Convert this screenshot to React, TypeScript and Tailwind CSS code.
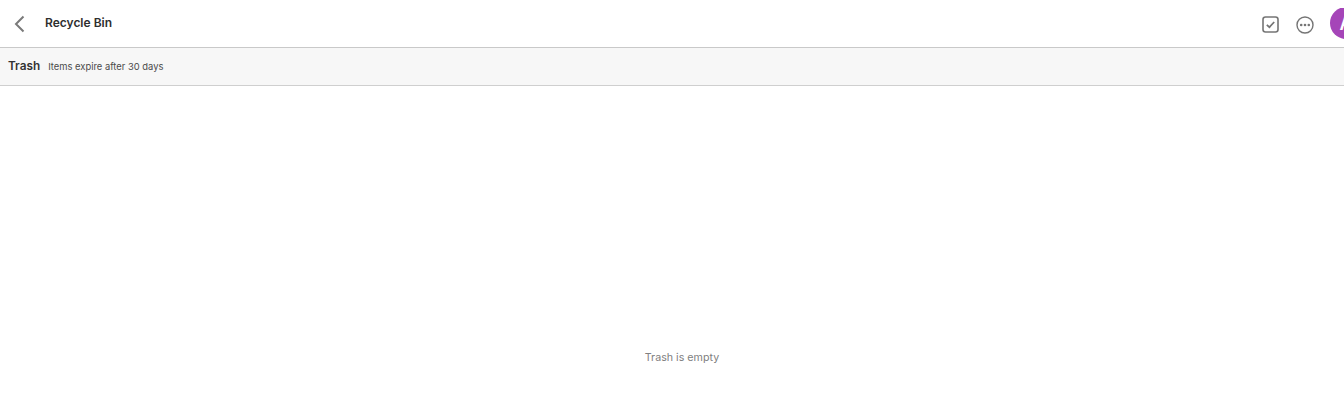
import React from 'react';

export default function App() {
  return (
    <div className="w-[1344px] h-[417px] overflow-hidden bg-white font-['Inter',sans-serif] flex flex-col">
      <header className="h-[48px] shrink-0 flex items-center border-b border-[#c9c9c9] bg-white">
        <button className="w-[45px] h-full flex items-center pl-[13px] pt-[1px] shrink-0">
          <svg width="12" height="18" viewBox="0 0 12 18" fill="none" stroke="#7a7a7a" strokeWidth="2">
            <path d="M10.5 1.5 3 9l7.5 7.5" />
          </svg>
        </button>
        <h1 className="text-[12px] leading-4 font-semibold text-[#2e2e2e] flex-1 pb-[2px]">Recycle Bin</h1>
        <div className="flex items-center w-[82px] shrink-0 overflow-hidden">
          <svg className="mt-[2px] shrink-0" width="17" height="17" viewBox="0 0 17 17" fill="none" stroke="#757575">
            <rect x="1" y="1" width="15" height="15" rx="2.5" strokeWidth="1.6" />
            <path d="M4.8 8.8 7.4 11.2 12.2 6" strokeWidth="1.7" />
          </svg>
          <svg className="ml-[17px] mt-[2px] shrink-0" width="18" height="18" viewBox="0 0 18 18" fill="none">
            <circle cx="9" cy="9" r="8" stroke="#757575" strokeWidth="1.4" />
            <circle cx="5.2" cy="9" r="1.3" fill="#757575" />
            <circle cx="9" cy="9" r="1.3" fill="#757575" />
            <circle cx="12.8" cy="9" r="1.3" fill="#757575" />
          </svg>
          <div className="ml-[16px] mt-[-1px] w-[32px] h-[32px] shrink-0 rounded-full bg-[#a545b8] flex items-center justify-center text-white text-[18px] font-semibold">
            A
          </div>
        </div>
      </header>
      <div className="h-[38px] shrink-0 flex items-center gap-2 pl-2 bg-[#f7f7f7] border-b border-[#cfcfcf]">
        <span className="text-[11.8px] font-semibold text-[#333333]">Trash</span>
        <span className="text-[9.4px] text-[#4a4a4a] pt-[2px]">Items expire after 30 days</span>
      </div>
      <main className="flex-1 flex justify-center pt-[264px] pl-[20px]">
        <p className="text-[10.7px] leading-4 text-[#808080]">Trash is empty</p>
      </main>
    </div>
  );
}
